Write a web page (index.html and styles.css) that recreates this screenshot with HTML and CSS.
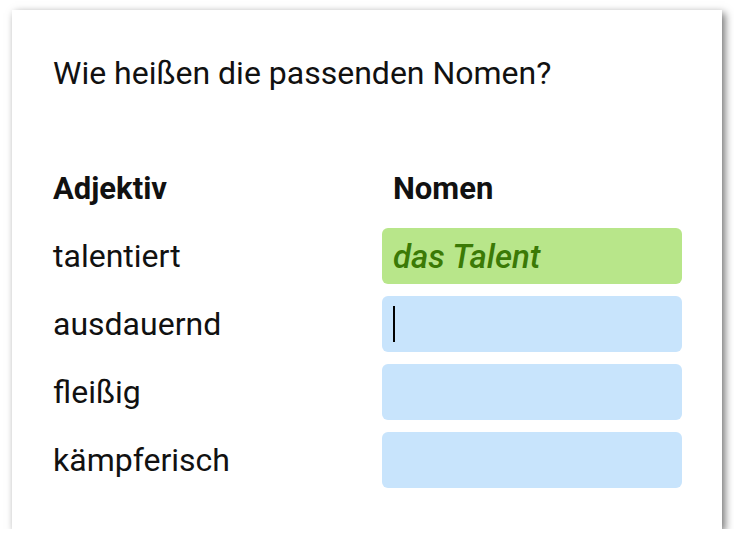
FILE: index.html
```html
<!DOCTYPE html>
<html lang="de">
<head>
<meta charset="utf-8">
<link rel="stylesheet" href="styles.css">
</head>
<body>
<div class="card">
  <p class="question">Wie heißen die passenden Nomen?</p>
  <div class="table">
    <div class="head">Adjektiv</div>
    <div class="head">Nomen</div>

    <div class="label">talentiert</div>
    <div class="field correct">das Talent</div>

    <div class="label">ausdauernd</div>
    <div class="field"><span class="caret"></span></div>

    <div class="label">fleißig</div>
    <div class="field"></div>

    <div class="label">kämpferisch</div>
    <div class="field"></div>
  </div>
</div>
</body>
</html>
```
FILE: styles.css
```css
html, body {
  margin: 0;
  padding: 0;
  background: #ffffff;
}
body {
  font-family: Roboto, "Noto Sans", sans-serif;
  color: #111111;
}
.card {
  margin: 10px 0 0 12px;
  width: 710px;
  height: 519px;
  box-sizing: border-box;
  padding: 45px 40px 0 41px;
  background: #ffffff;
  box-shadow: 3px 3px 8px rgba(0, 0, 0, 0.55);
}
.question {
  margin: 0;
  font-size: 32px;
  line-height: 36px;
}
.table {
  margin-top: 80px;
  display: grid;
  grid-template-columns: 329px 300px;
  grid-template-rows: 45px repeat(4, 56px);
  row-gap: 12px;
  align-items: center;
}
.head {
  align-self: start;
  font-size: 31px;
  line-height: 36px;
  font-weight: 700;
}
.head + .head {
  padding-left: 11px;
}
.label {
  font-size: 32px;
  line-height: 36px;
}
.field {
  height: 56px;
  box-sizing: border-box;
  border-radius: 6px;
  background: #c8e4fc;
  padding: 0 11px;
  display: flex;
  align-items: center;
  font-size: 32px;
}
.field.correct {
  background: #b8e68a;
  color: #3b7a06;
  font-style: italic;
  font-weight: 500;
  font-size: 33px;
}
.caret {
  width: 2px;
  height: 36px;
  background: #000000;
}
```
